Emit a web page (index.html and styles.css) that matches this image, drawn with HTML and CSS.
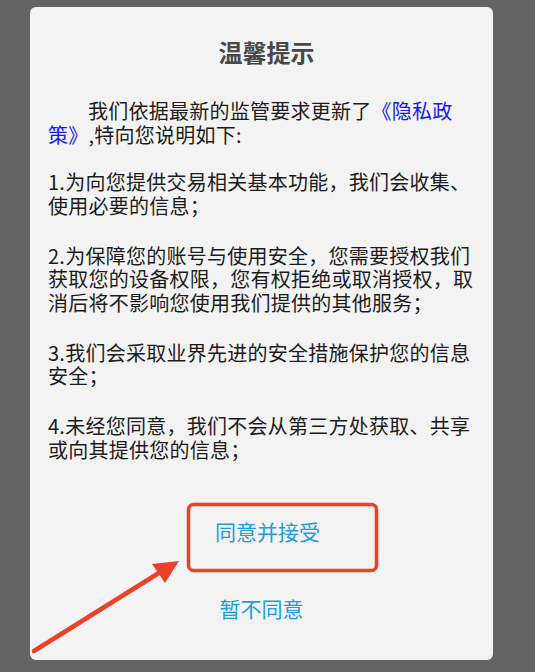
FILE: index.html
```html
<!DOCTYPE html>
<html lang="zh-CN">
<head>
  <meta charset="UTF-8">
  <meta name="viewport" content="width=device-width, initial-scale=1.0">
  <title>温馨提示</title>
  <link rel="stylesheet" href="styles.css">
</head>
<body>
  <div class="dialog">
    <h1 class="dialog-title">温馨提示</h1>
    <div class="dialog-body">
      <p class="intro">我们依据最新的监管要求更新了<a href="#" class="policy-link">《隐私政<br>策》</a>,特向您说明如下:</p>
      <p>1.为向您提供交易相关基本功能，我们会收集、<br>使用必要的信息；</p>
      <p>2.为保障您的账号与使用安全，您需要授权我们<br>获取您的设备权限，您有权拒绝或取消授权，取<br>消后将不影响您使用我们提供的其他服务；</p>
      <p>3.我们会采取业界先进的安全措施保护您的信息<br>安全；</p>
      <p>4.未经您同意，我们不会从第三方处获取、共享<br>或向其提供您的信息；</p>
    </div>
    <div class="dialog-actions">
      <button class="btn-text btn-accept">同意并接受</button>
      <button class="btn-text">暂不同意</button>
    </div>
    <!-- 标注：红框和箭头 -->
    <svg class="annotation" width="463" height="653" viewBox="0 0 463 653">
      <rect x="158.5" y="497.5" width="188" height="66" rx="5" fill="none" stroke="#ea4129" stroke-width="3.5"/>
      <line x1="4" y1="644" x2="132" y2="564" stroke="#ea4129" stroke-width="4.5" stroke-linecap="round"/>
      <polygon points="149,554 122,557 135,576" fill="#ea4129"/>
    </svg>
  </div>
</body>
</html>
```

FILE: styles.css
```css
body {
  margin: 0;
  padding: 0;
  background-color: #646464;
  font-family: "Noto Sans CJK SC", sans-serif;
  height: 672px;
  overflow: hidden;
}

.dialog {
  position: relative;
  box-sizing: border-box;
  width: 463px;
  height: 653px;
  margin: 7px 0 0 30px;
  padding-top: 30px;
  background-color: #f3f3f3;
  border-radius: 6px;
  display: flex;
  flex-direction: column;
}

.dialog-title {
  margin: 0;
  padding-left: 10px;
  font-size: 24px;
  line-height: 30px;
  font-weight: bold;
  color: #484848;
  text-align: center;
}

.dialog-body {
  margin-top: 32px;
  padding: 0 5px 0 18px;
  font-size: 20px;
  letter-spacing: 0.25px;
  line-height: 23.5px;
  color: #1c1c1c;
}

.dialog-body p {
  margin: 0 0 26.5px;
  white-space: nowrap;
}

.dialog-body .intro {
  margin-bottom: 24px;
  text-indent: 2em;
}

.dialog-body p:last-child {
  margin-bottom: 0;
}

.policy-link {
  color: #1818f2;
  text-decoration: none;
}

.dialog-actions {
  margin-top: 46px;
  display: flex;
  flex-direction: column;
  align-items: center;
  gap: 29px;
}

.btn-text {
  height: 48px;
  padding: 0 20px;
  border: none;
  background: none;
  font-family: "Noto Sans CJK SC", sans-serif;
  font-size: 21px;
  color: #1c9be0;
  cursor: pointer;
}

.btn-accept {
  padding-left: 32px;
}

.annotation {
  position: absolute;
  top: 0;
  left: 0;
  overflow: visible;
  pointer-events: none;
}
```
